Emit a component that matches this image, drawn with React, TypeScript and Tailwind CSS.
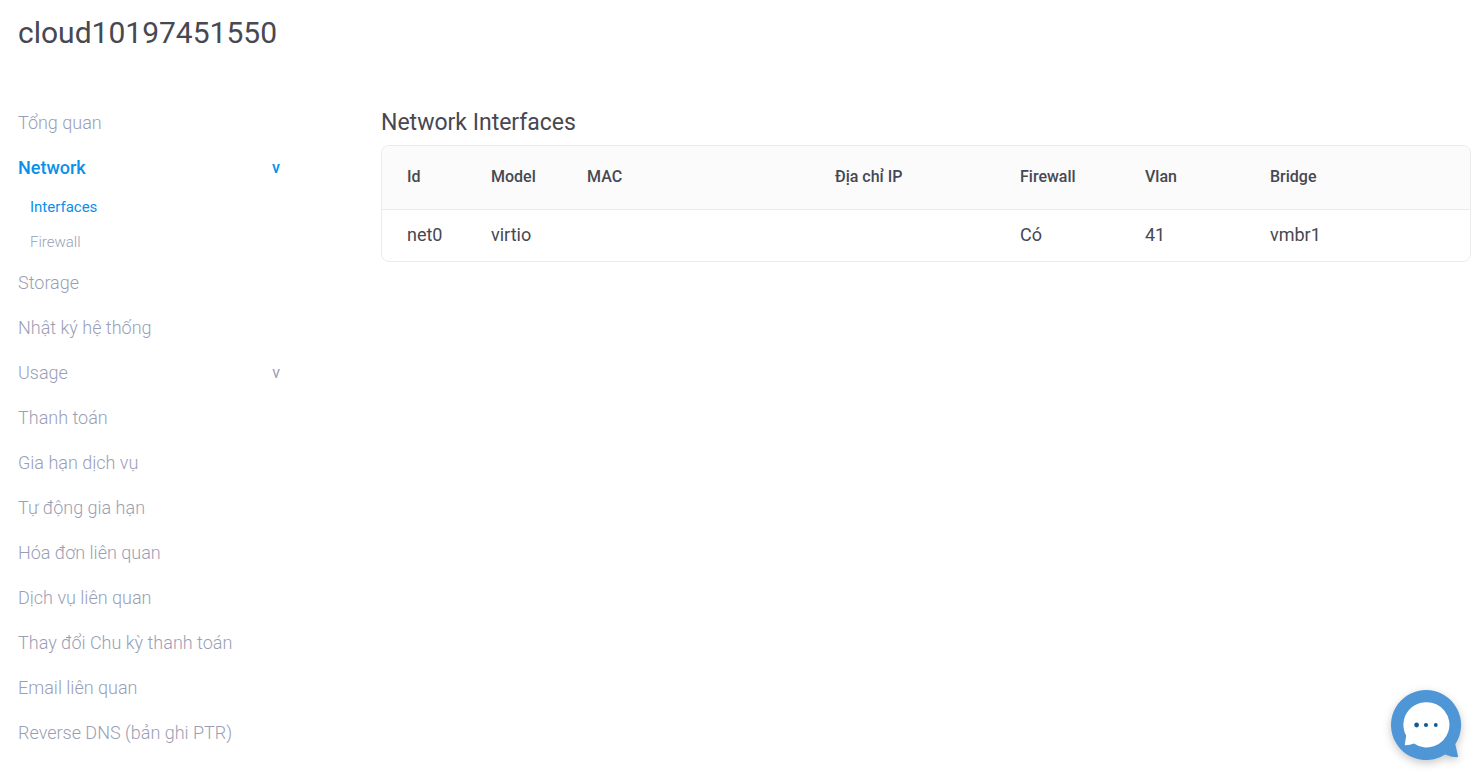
import React from 'react';
import clsx from 'clsx';

interface NavItem {
  label: string;
  active?: boolean;
  children?: NavItem[];
  expanded?: boolean;
}

interface NetworkInterface {
  id: string;
  model: string;
  mac: string;
  ip: string;
  firewall: boolean;
  vlan: number;
  bridge: string;
}

const navItems: NavItem[] = [
  { label: 'Tổng quan' },
  {
    label: 'Network',
    active: true,
    expanded: true,
    children: [{ label: 'Interfaces', active: true }, { label: 'Firewall' }],
  },
  { label: 'Storage' },
  { label: 'Nhật ký hệ thống' },
  { label: 'Usage', children: [] },
  { label: 'Thanh toán' },
  { label: 'Gia hạn dịch vụ' },
  { label: 'Tự động gia hạn' },
  { label: 'Hóa đơn liên quan' },
  { label: 'Dịch vụ liên quan' },
  { label: 'Thay đổi Chu kỳ thanh toán' },
  { label: 'Email liên quan' },
  { label: 'Reverse DNS (bản ghi PTR)' },
];

const columns = [
  { label: 'Id', width: 'w-[84px]' },
  { label: 'Model', width: 'w-24' },
  { label: 'MAC', width: 'w-[248px]' },
  { label: 'Địa chỉ IP', width: 'w-[185px]' },
  { label: 'Firewall', width: 'w-[125px]' },
  { label: 'Vlan', width: 'w-[125px]' },
  { label: 'Bridge', width: '' },
];

const interfaces: NetworkInterface[] = [
  { id: 'net0', model: 'virtio', mac: '', ip: '', firewall: true, vlan: 41, bridge: 'vmbr1' },
];

const SideNav = () => (
  <nav className="w-[262px] shrink-0">
    <ul>
      {navItems.map((item) => (
        <li key={item.label}>
          <a
            href="#"
            className={clsx(
              'flex h-[45px] items-center justify-between text-lg',
              item.active ? 'font-medium text-[#0a90eb]' : 'font-light text-[#9a9eb5]'
            )}
          >
            {item.label}
            {item.children && (
              <span className={clsx('text-base', item.active ? 'font-medium' : 'font-normal')}>v</span>
            )}
          </a>
          {item.expanded && (
            <ul className="pl-3">
              {item.children?.map((child) => (
                <li key={child.label}>
                  <a
                    href="#"
                    className={clsx(
                      'flex h-[35px] items-center text-[15px]',
                      child.active ? 'font-normal text-[#0a90eb]' : 'font-light text-[#9a9eb5]'
                    )}
                  >
                    {child.label}
                  </a>
                </li>
              ))}
            </ul>
          )}
        </li>
      ))}
    </ul>
  </nav>
);

const InterfaceTable = () => (
  <div className="rounded-lg border border-[#ebebeb] overflow-hidden">
    <table className="w-full table-fixed text-left">
      <thead className="bg-[#fbfbfb]">
        <tr className="h-[63px] border-b border-[#ebebeb]">
          {columns.map((col) => (
            <th key={col.label} className={clsx('pl-[25px] text-base font-medium', col.width)}>
              {col.label}
            </th>
          ))}
        </tr>
      </thead>
      <tbody>
        {interfaces.map((row) => (
          <tr key={row.id} className="h-[52px] text-lg">
            <td className="pl-[25px]">{row.id}</td>
            <td className="pl-[25px]">{row.model}</td>
            <td className="pl-[25px]">{row.mac}</td>
            <td className="pl-[25px]">{row.ip}</td>
            <td className="pl-[25px]">{row.firewall ? 'Có' : 'Không'}</td>
            <td className="pl-[25px]">{row.vlan}</td>
            <td className="pl-[25px]">{row.bridge}</td>
          </tr>
        ))}
      </tbody>
    </table>
  </div>
);

const ChatButton = () => (
  <button
    type="button"
    aria-label="Chat"
    className="fixed right-5 bottom-3 cursor-pointer drop-shadow-[0_3px_4px_rgba(0,0,0,0.22)]"
  >
    <svg width="72" height="72" viewBox="0 0 72 72">
      <path
        d="M36 1a35 35 0 1 0 19 64.400c4 1.600 8 2.600 12 2.900.8 0 1.200-.5 1-1.200L65.300 55.300A35 35 0 0 0 36 1z"
        fill="#4f96d6"
      />
      <path
        d="M36 13.200a22.600 22.600 0 0 0-19.800 33.500l-1.400 8.700c-.1.700.3 1.100 1 .9 2.800-.3 5.300-1 8.200-1.900A22.600 22.600 0 1 0 36 13.200z"
        fill="#fff"
      />
      <g fill="#0f5c96">
        <circle cx="26.6" cy="36" r="2.4" />
        <circle cx="36" cy="36" r="2.1" />
        <circle cx="45.8" cy="36" r="1.9" />
      </g>
    </svg>
  </button>
);

export default function App() {
  return (
    <div className="min-h-screen bg-white pl-[18px] pr-[11px] pb-4 font-['Roboto',sans-serif] text-[#464852]">
      <header className="flex h-[100px] items-start pt-[13px]">
        <h1 className="text-3xl leading-10">cloud10197451550</h1>
      </header>
      <div className="flex gap-[101px]">
        <SideNav />
        <main className="min-w-0 flex-1">
          <h2 className="flex h-[45px] items-center pt-0.5 text-[23px]">Network Interfaces</h2>
          <InterfaceTable />
        </main>
      </div>
      <ChatButton />
    </div>
  );
}
